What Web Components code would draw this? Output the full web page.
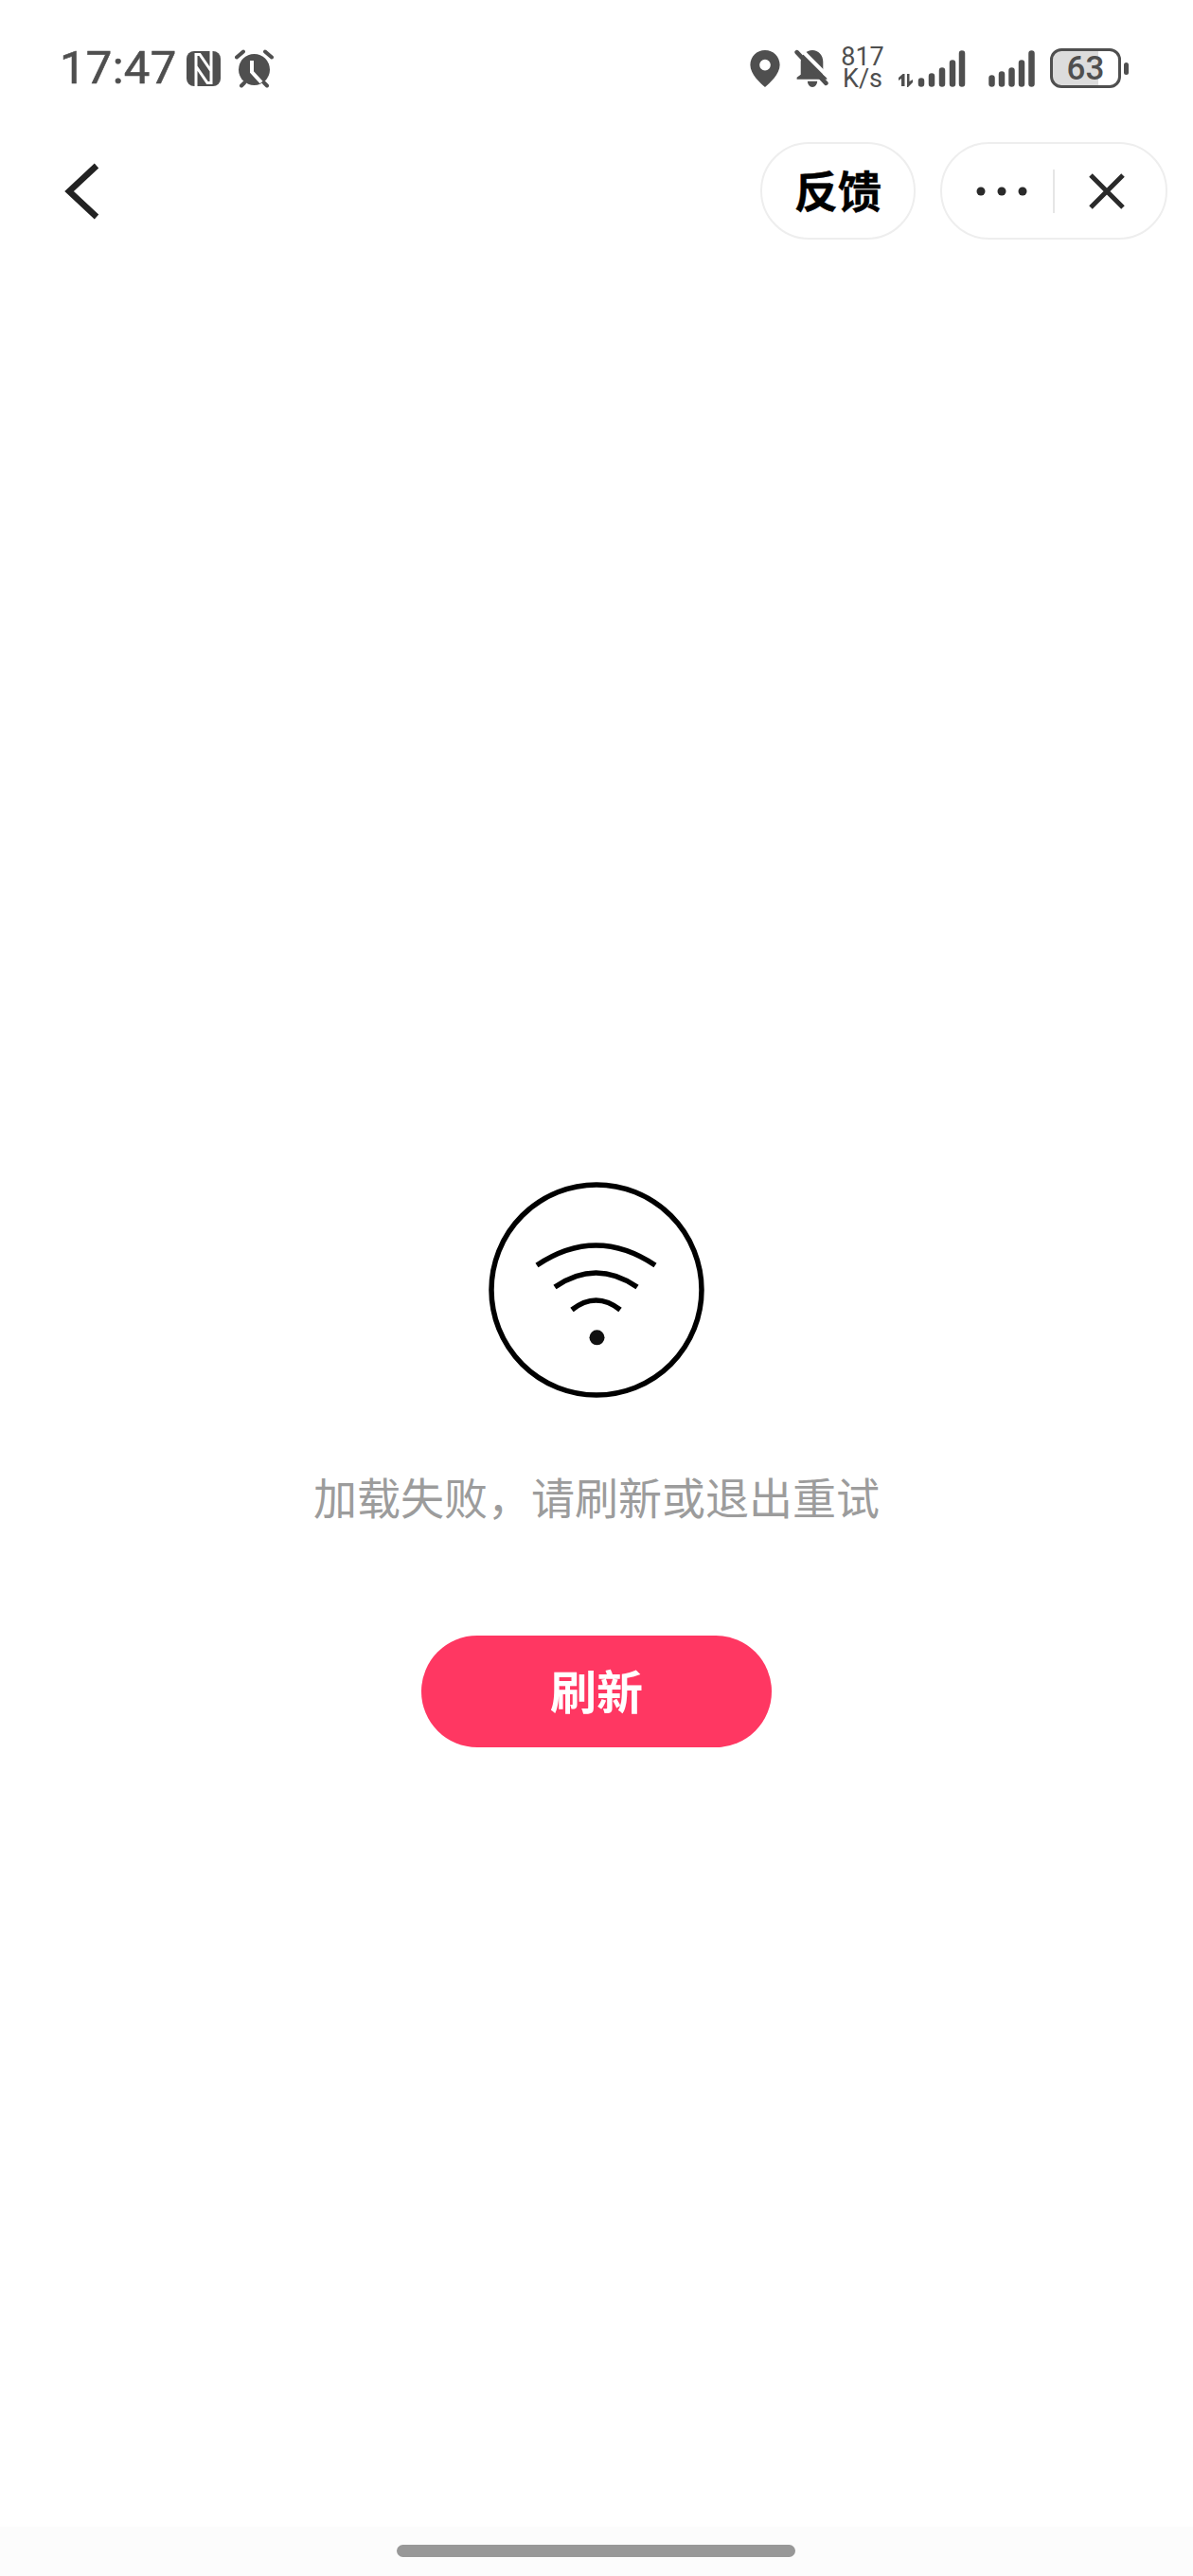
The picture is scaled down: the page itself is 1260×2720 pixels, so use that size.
<!DOCTYPE html>
<html lang="zh-CN"><head><meta charset="utf-8"><title>加载失败</title>
<style>html,body{margin:0;padding:0;background:#fff}body{width:1260px;height:2720px;overflow:hidden;font-family:"Noto Sans CJK SC","Noto Sans",sans-serif}</style></head>
<body><app-page></app-page>
<script>
function def(name, html){
  customElements.define(name, class extends HTMLElement{
    constructor(){super();this.attachShadow({mode:'open'}).innerHTML=html;}
  });
}
def('status-bar',`<style>
:host{display:flex;height:70px;padding:0 68px 0 63px;margin-top:37px;align-items:center;justify-content:space-between;color:#4f4f4f}
.g{display:flex;align-items:center}
.t{font:400 49px/70px Roboto,"Noto Sans",sans-serif;-webkit-text-stroke:.6px #4f4f4f;letter-spacing:.3px;width:123px;white-space:nowrap}
svg{display:block;fill:#4f4f4f}
.sp{font:400 27px/23px Roboto,sans-serif;width:46px;text-align:center;margin:0 15px 0 13px}
.bat{width:75px;height:42px;border:3.5px solid #4f4f4f;border-radius:12px;box-sizing:border-box;display:flex;align-items:center;justify-content:center;font:500 35px/35px Roboto,sans-serif;color:#4f4f4f;background:linear-gradient(90deg,#dcdcdc 0 70%,#fff 70%)}
</style>
<div class="g"><span class="t">17:47</span>
<svg style="margin-left:11px" width="36" height="37" viewBox="0 0 36 37"><rect width="36" height="37" rx="8"/><path d="M10 37V3.5H14L26 21M26 0V33.500H22L10 16" fill="none" stroke="#fff" stroke-width="3"/></svg>
<svg style="margin-left:15px" width="41" height="41" viewBox="0 0 41 41"><circle cx="20.500" cy="21.500" r="16.500"/><path d="M2 8.500L9 2.500M39 8.500L32 2.500M7 38.500L10 35.500M34 38.500L31 35.500" stroke="#4f4f4f" stroke-width="4" stroke-linecap="round" fill="none"/><path d="M18 12V24L28 35" fill="none" stroke="#fff" stroke-width="4"/></svg></div>
<div class="g">
<svg width="32" height="39" viewBox="0 0 32 40"><path fill-rule="evenodd" d="M16 0C7 0 0 7 0 16c0 10 11 20 16 24 5-4 16-14 16-24C32 7 25 0 16 0zm0 10a6 6 0 1 1 0 12 6 6 0 0 1 0-12z"/></svg>
<svg style="margin-left:15px" width="36" height="40" viewBox="0 0 34 39"><path d="M18 1c6 0 11 5 11 12v13l4 3v2H2v-2l4-3V13C6 6 12 1 18 1z"/><path d="M13 33h10c0 3-2 6-5 6s-5-3-5-6z"/><path d="M5 -1L38 32" stroke="#fff" stroke-width="4" fill="none"/><path d="M2 3L32 35" stroke="#4f4f4f" stroke-width="4.500" stroke-linecap="round" fill="none"/></svg>
<div class="sp"><div>817</div><div>K/s</div></div>
<svg width="72" height="40" viewBox="0 0 72 40"><path d="M3 39V31L0 33V30L4.500 26H6.500V39zM9 26H11.500V34L15 32V35L10 40H9z"/><g stroke="#4f4f4f" stroke-linecap="round" fill="none" stroke-width="6.500"><path d="M24 33.500v3M35 28.500v8M46 22.500v14M57 14.500v22M67 4.500v32"/></g></svg>
<svg style="margin-left:23px" width="49" height="40" viewBox="0 0 49 40"><g stroke="#4f4f4f" stroke-linecap="round" fill="none" stroke-width="6.500"><path d="M3.500 30.500v6M14 26.500v10M24.500 22.500v14M35 14.500v22M45.500 4.500v32"/></g></svg>
<div class="bat" style="margin-left:16px">63</div>
<svg style="margin-left:3px" width="5" height="13" viewBox="0 0 5 13"><rect width="5" height="13" rx="2.500"/></svg>
</div>`);
def('nav-bar',`<style>
:host{display:flex;height:103px;margin-top:43px;padding:0 27px 0 67px;align-items:center;justify-content:space-between}
.r{display:flex;align-items:center;gap:26px}
.pill{display:flex;align-items:center;height:103px;box-sizing:border-box;border:2px solid #eeeeee;border-radius:52px;background:#fff}
.fb{width:164px;justify-content:center;padding-bottom:5px;font:700 46px/1 "Noto Sans CJK SC",sans-serif;-webkit-text-stroke:.5px #000;color:#000}
.mn{width:240px}
svg{display:block}
.div{width:2px;height:46px;background:#e6e6e6}
</style>
<svg width="38" height="60" viewBox="0 0 38 60"><path d="M35 3L6 30l29 27" fill="none" stroke="#222" stroke-width="6.500"/></svg>
<div class="r"><div class="pill fb">反馈</div>
<div class="pill mn"><svg style="margin-left:36px" width="54" height="10" viewBox="0 0 54 10"><circle cx="5" cy="5" r="4.500" fill="#2a2a2a"/><circle cx="27" cy="5" r="4.500" fill="#2a2a2a"/><circle cx="49" cy="5" r="4.500" fill="#2a2a2a"/></svg><div class="div" style="margin-left:27px"></div><svg style="margin-left:36px" width="38" height="38" viewBox="0 0 38 38"><path d="M2 2l34 34M36 2L2 36" stroke="#2a2a2a" stroke-width="5" fill="none"/></svg></div></div>`);
def('error-state',`<style>
:host{display:flex;flex-direction:column;align-items:center;margin-top:995px}
svg{display:block}
.m{font:400 46px/46px "Noto Sans CJK SC",sans-serif;color:#9c9c9c;margin-top:80px;height:46px;white-space:nowrap}
.b{margin-top:125px;width:370px;height:118px;box-sizing:border-box;padding-bottom:5px;border-radius:59px;background:#ff3762;color:#fff;display:flex;align-items:center;justify-content:center;font:700 49px/1 "Noto Sans CJK SC",sans-serif}
</style>
<svg width="228" height="228" viewBox="0 0 228 228"><circle cx="114" cy="114" r="111" fill="none" stroke="#000" stroke-width="5.500"/>
<g fill="none" stroke="#000" stroke-width="5.500"><path d="M51 88Q113.500 46 176 88"/><path d="M70 111Q113.500 81 157 111"/><path d="M88 135Q113.500 115 139 135"/></g><circle cx="114.500" cy="164.300" r="8" fill="#111"/></svg>
<div class="m">加载失败，请刷新或退出重试</div>
<div class="b">刷新</div>`);
def('home-bar',`<style>
:host{display:block;position:absolute;left:0;right:0;bottom:0;height:52px;background:#fcfcfc}
i{display:block;position:absolute;left:419px;top:19px;width:421px;height:13px;border-radius:7px;background:#989898}
</style><i></i>`);
def('app-page',`<style>:host{display:block;position:relative;width:1260px;height:2720px;overflow:hidden;background:#fff}div.w{display:flow-root}</style>
<div class="w"><status-bar></status-bar><nav-bar></nav-bar><error-state></error-state></div><home-bar></home-bar>`);
</script></body></html>
